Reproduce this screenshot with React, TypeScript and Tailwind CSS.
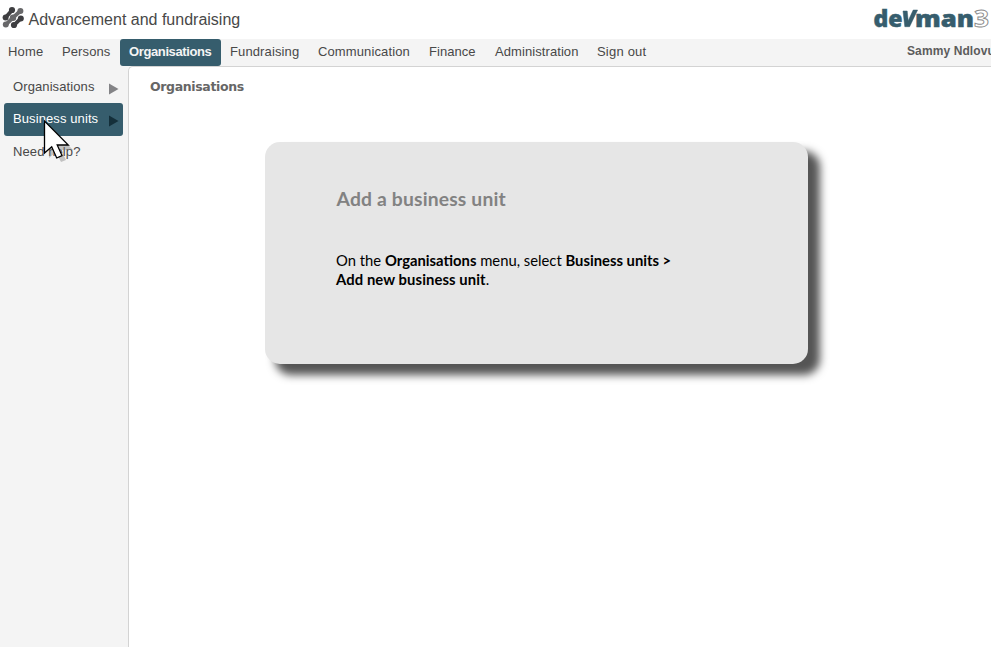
import React from "react";

const navItems = [
  { label: "Home", box: "w-[53px] tracking-[0.2px]" },
  { label: "Persons", box: "w-[67px] tracking-[0.1px]" },
  { label: "Organisations", box: "w-[101px] tracking-[-0.38px]", active: true },
  { label: "Fundraising", box: "w-[88px] tracking-[0.12px]" },
  { label: "Communication", box: "w-[111px] tracking-[0.12px]" },
  { label: "Finance", box: "w-[66px] tracking-[0.05px]" },
  { label: "Administration", box: "w-[102px] tracking-[0.08px]" },
  { label: "Sign out", box: "w-[70px] tracking-[0.2px]" },
];

function DotsLogo() {
  return (
    <svg className="block h-[23px] w-[24px] shrink-0" viewBox="0 0 24 23" strokeLinecap="round">
      <g fill="#68686a" stroke="#68686a">
        <path d="M4.8 18.6 12 11.7 19.4 5" strokeWidth="3.8" fill="none" />
        <circle cx="4.8" cy="18.6" r="3" stroke="none" />
        <circle cx="12" cy="11.7" r="3.2" stroke="none" />
        <circle cx="19.4" cy="5" r="3" stroke="none" />
      </g>
      <g fill="#3e3e41" stroke="#3e3e41">
        <path d="M4.6 11.4 11 4.2" strokeWidth="3.8" />
        <circle cx="4.6" cy="11.4" r="3" stroke="none" />
        <circle cx="11" cy="4" r="3.1" stroke="none" />
        <path d="M13.2 19 19.6 12.6" strokeWidth="3.8" />
        <circle cx="13" cy="19" r="3.1" stroke="none" />
        <circle cx="19.8" cy="12.4" r="3" stroke="none" />
      </g>
    </svg>
  );
}

function Brand() {
  return (
    <svg className="block h-[36px] w-[120px]" viewBox="0 0 120 36" fontFamily="'Open Sans', 'Noto Sans', sans-serif">
      <g fontSize="23" fontWeight="800" fill="#365d6d" stroke="#365d6d" strokeWidth="0.5">
        <text x="2.5" y="26.7" textLength="29" lengthAdjust="spacingAndGlyphs">de</text>
        <path d="M32 11h4.2l1 9.8L42.2 10h4.4L38.6 26.7h-4.8Z" />
        <text x="44" y="26.7" textLength="59" lengthAdjust="spacingAndGlyphs">man</text>
      </g>
      <text x="103" y="27" fontSize="24" fontWeight="700" textLength="15" lengthAdjust="spacingAndGlyphs" fill="#fff" stroke="#8b8b8b" strokeWidth="0.9">3</text>
    </svg>
  );
}

function Arrow({ className }: { className: string }) {
  return (
    <svg className={`block h-[12px] w-[10px] ${className}`} viewBox="0 0 10 12">
      <path d="M0 0.5 9.5 6 0 11.5Z" fill="currentColor" />
    </svg>
  );
}

function Pointer() {
  return (
    <svg className="absolute left-[40px] top-[116px] z-10 h-[50px] w-[36px]" viewBox="0 0 36 50">
      <path d="M9 9V42L16 36 21 46 26 44 21 34H33Z" fill="#777" opacity="0.4" />
      <path d="M4.5 5V37L11.7 30.8 16.7 42 22 39.6 17.2 29H28.3Z" fill="#fff" stroke="#000" strokeWidth="1.3" />
    </svg>
  );
}

export default function App() {
  return (
    <div className="relative flex h-[647px] w-[991px] flex-col overflow-hidden bg-white font-['Liberation_Sans',Arial,sans-serif] text-[#484848]">
      <header className="flex h-[39px] shrink-0 items-start justify-between">
        <div className="flex items-start pt-[6px] pl-px">
          <DotsLogo />
          <h1 className="ml-[3.5px] mt-[2px] text-[16px] leading-6 whitespace-nowrap">Advancement and fundraising</h1>
        </div>
        <Brand />
      </header>
      <nav className="flex h-[28px] shrink-0 justify-between border-b border-[#d3d3d3] bg-[#f4f4f4] text-[13px] leading-[25px] whitespace-nowrap">
        <div className="flex">
          {navItems.map((n) => (
            <a key={n.label} className={`block h-[27px] ${n.box} ${n.active ? "rounded-[3px] bg-[#365d6d] pl-[9px] font-bold text-[#f4f4f4]" : n.label === "Home" ? "pl-[8px]" : "pl-[9px]"}`}>
              {n.label}
            </a>
          ))}
        </div>
        <span className="w-[84px] text-[12px] leading-[24px] font-bold tracking-[0.1px] text-[#5c5c5c]">Sammy Ndlovu</span>
      </nav>
      <div className="-mt-px flex min-h-0 grow bg-[#f4f4f4]">
        <aside className="flex w-[128px] shrink-0 flex-col bg-[#f4f4f4] pt-[5px] pl-[4px] text-[13px] whitespace-nowrap">
          <div className="flex h-[32px] w-[119px] justify-between pl-[9px] pr-[4px] leading-[31px]">
            <span className="tracking-[0.1px]">Organisations</span>
            <Arrow className="mt-[12px] text-[#838386]" />
          </div>
          <div className="flex h-[33px] w-[119px] justify-between rounded-[3px] bg-[#365d6d] pl-[9px] pr-[4px] leading-[31px] text-white">
            <span className="tracking-[0.1px]">Business units</span>
            <Arrow className="mt-[12px] text-[#142f3a]" />
          </div>
          <div className="h-[32px] pl-[9px] leading-[32px] tracking-[0.1px]">Need help?</div>
        </aside>
        <main className="grow rounded-tl-[5px] border-t border-l border-[#d3d3d3] bg-white">
          <h2 className="h-[75px] pt-[10px] pl-[21px] font-['DejaVu_Sans',Verdana,sans-serif] text-[12.5px] leading-[19px] font-bold tracking-[-0.35px] text-[#666]">Organisations</h2>
          <section className="ml-[136px] h-[222px] w-[543px] rounded-[15px] bg-[#e6e6e6] pt-[44px] pl-[71px] font-['Lato',sans-serif] text-black shadow-[11px_10px_8px_1px_#555]">
            <h3 className="h-[65px] pl-[0.6px] text-[19.3px] leading-[25px] font-bold tracking-[0.17px] text-[#828282]">Add a business unit</h3>
            <p className="text-[14.8px] leading-[19px] whitespace-nowrap">
              On the <b>Organisations</b> menu, select <b>Business units &gt;</b>
              <br />
              <b className="tracking-[0.1px]">Add new business unit</b>.
            </p>
          </section>
        </main>
      </div>
      <Pointer />
    </div>
  );
}
